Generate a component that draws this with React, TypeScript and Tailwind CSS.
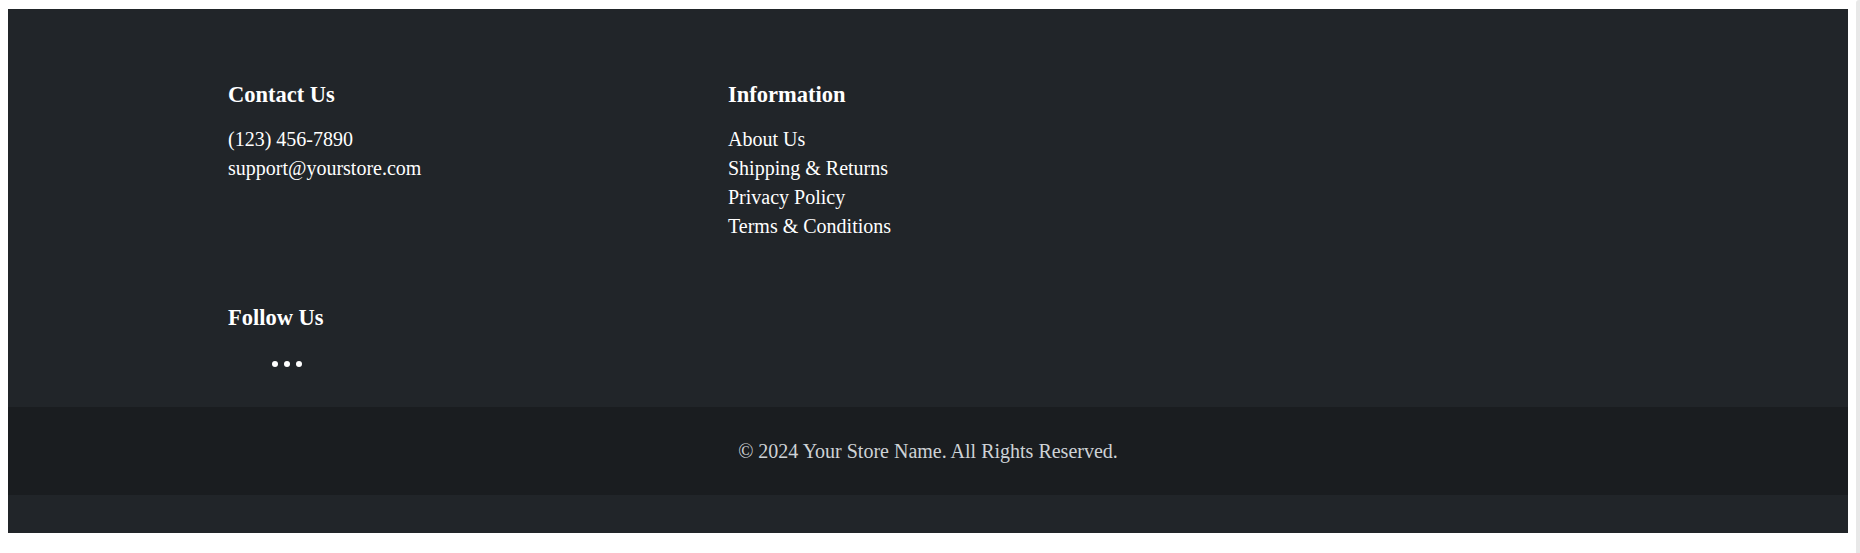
export default function App() {
  const serif = { fontFamily: '"Liberation Serif", "Times New Roman", serif' };
  return (
    <div className="flex w-[1860px] h-[553px] bg-white overflow-hidden" style={serif}>
      <div className="w-[1856px] pl-2 pt-[9px]">
        <footer className="w-[1840px] h-[524px] bg-[#212529] text-white flex flex-col">
          <div className="w-[1400px] mx-auto pt-[72px]">
            <div className="flex">
              <div className="w-[500px]">
                <h5 className="text-[22.5px] leading-[1.2] font-bold m-0">Contact Us</h5>
                <div className="mt-[17px] text-[20px] leading-[29px]">
                  <p>(123) 456-7890</p>
                  <p>support@yourstore.com</p>
                </div>
              </div>
              <div className="w-[500px]">
                <h5 className="text-[22.5px] leading-[1.2] font-bold m-0">Information</h5>
                <ul className="mt-[17px] text-[20px] leading-[29px]">
                  <li>About Us</li>
                  <li>Shipping &amp; Returns</li>
                  <li>Privacy Policy</li>
                  <li>Terms &amp; Conditions</li>
                </ul>
              </div>
            </div>
            <div className="mt-[63px]">
              <h5 className="text-[22.5px] leading-[1.2] font-bold m-0">Follow Us</h5>
              <div className="flex gap-[6px] pl-[44px] mt-[30px]">
                <span className="block w-[6px] h-[6px] rounded-full bg-white"></span>
                <span className="block w-[6px] h-[6px] rounded-full bg-white"></span>
                <span className="block w-[6px] h-[6px] rounded-full bg-white"></span>
              </div>
            </div>
          </div>
          <div className="mt-auto mb-[38px] h-[88px] bg-[#1a1d20] flex items-center justify-center">
            <p className="text-[20px] leading-[29px] text-[#ced2d6]">© 2024 Your Store Name. All Rights Reserved.</p>
          </div>
        </footer>
      </div>
      <div className="w-[4px] h-[553px] bg-[#e8e8e8] rounded-tl-[3px]"></div>
    </div>
  );
}
